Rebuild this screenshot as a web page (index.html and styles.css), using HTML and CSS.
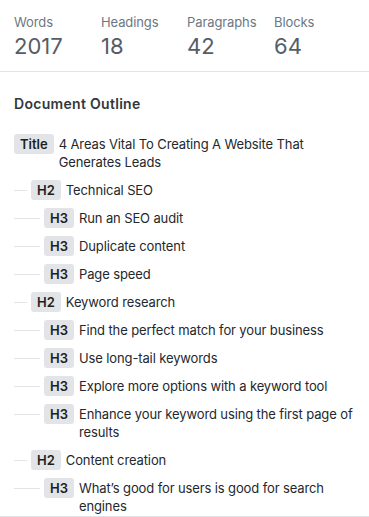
FILE: index.html
```html
<!DOCTYPE html>
<html lang="en">
<head>
    <meta charset="UTF-8" />
    <meta name="viewport" content="width=device-width, initial-scale=1" />
    <title>Document Outline</title>
    <link rel="stylesheet" href="styles.css">
</head>
<body>

<div class="panel">
    <!-- counts -->
    <div class="counts">
        <div class="count">
            <span class="count-label">Words</span>
            <span class="count-number">2017</span>
        </div>
        <div class="count">
            <span class="count-label">Headings</span>
            <span class="count-number">18</span>
        </div>
        <div class="count">
            <span class="count-label">Paragraphs</span>
            <span class="count-number">42</span>
        </div>
        <div class="count">
            <span class="count-label">Blocks</span>
            <span class="count-number">64</span>
        </div>
    </div>

    <div class="outline">
        <h2 class="outline-title">Document Outline</h2>

        <ul class="outline-list">
            <li class="item">
                <span class="level">Title</span>
                <span class="item-text">4 Areas Vital To Creating A Website That Generates Leads</span>
            </li>
            <li class="item">
                <span class="dash"></span>
                <span class="level">H2</span>
                <span class="item-text">Technical SEO</span>
            </li>
            <li class="item">
                <span class="dash dash-2"></span>
                <span class="level">H3</span>
                <span class="item-text">Run an SEO audit</span>
            </li>
            <li class="item">
                <span class="dash dash-2"></span>
                <span class="level">H3</span>
                <span class="item-text">Duplicate content</span>
            </li>
            <li class="item">
                <span class="dash dash-2"></span>
                <span class="level">H3</span>
                <span class="item-text">Page speed</span>
            </li>
            <li class="item">
                <span class="dash"></span>
                <span class="level">H2</span>
                <span class="item-text">Keyword research</span>
            </li>
            <li class="item">
                <span class="dash dash-2"></span>
                <span class="level">H3</span>
                <span class="item-text">Find the perfect match for your business</span>
            </li>
            <li class="item">
                <span class="dash dash-2"></span>
                <span class="level">H3</span>
                <span class="item-text">Use long-tail keywords</span>
            </li>
            <li class="item">
                <span class="dash dash-2"></span>
                <span class="level">H3</span>
                <span class="item-text">Explore more options with a keyword tool</span>
            </li>
            <li class="item">
                <span class="dash dash-2"></span>
                <span class="level">H3</span>
                <span class="item-text">Enhance your keyword using the first page of results</span>
            </li>
            <li class="item">
                <span class="dash"></span>
                <span class="level">H2</span>
                <span class="item-text">Content creation</span>
            </li>
            <li class="item">
                <span class="dash dash-2"></span>
                <span class="level">H3</span>
                <span class="item-text">What’s good for users is good for search engines</span>
            </li>
        </ul>
    </div>
</div>

</body>
</html>
```

FILE: styles.css
```css
body {
    margin: 0;
    background: #fff;
    font-family: Inter, "Noto Sans", sans-serif;
    color: #1e1e1e;
}
.panel {
    width: 369px;
    height: 517px;
    box-sizing: border-box;
    border-bottom: 1px solid #e2e4e7;
    overflow: hidden;
}

/* counts */
.counts {
    display: grid;
    grid-template-columns: 87px 86px 87px 1fr;
    padding: 13px 14px 10px;
    border-bottom: 1px solid #e2e4e7;
}
.count {
    display: flex;
    flex-direction: column;
}
.count-label {
    font-size: 13px;
    line-height: 18px;
    color: #6c7781;
    letter-spacing: -0.1px;
}
.count-number {
    font-size: 22px;
    line-height: 30px;
    color: #555d66;
}

/* outline */
.outline {
    padding: 22px 8px 0 14px;
}
.outline-title {
    margin: 0 0 20px;
    font-size: 14px;
    line-height: 20px;
    font-weight: 600;
    letter-spacing: 0.3px;
    color: #32373c;
}
.outline-list {
    list-style: none;
    margin: 0;
    padding: 0;
}
.item {
    display: flex;
    align-items: flex-start;
    margin-bottom: 8px;
    font-size: 13px;
}
.dash {
    flex: none;
    width: 13px;
    height: 1px;
    margin: 10px 4px 0 0;
    background: #e2e4e7;
}
.dash-2 {
    width: 26px;
}
.level {
    flex: none;
    height: 20px;
    line-height: 20px;
    padding: 0 6px;
    margin-right: 5px;
    border-radius: 3px;
    background: #e2e4e7;
    font-weight: 600;
    color: #1e1e1e;
}
.item-text {
    padding: 1px 0;
    line-height: 18px;
    letter-spacing: -0.12px;
    color: #23282d;
}
```
